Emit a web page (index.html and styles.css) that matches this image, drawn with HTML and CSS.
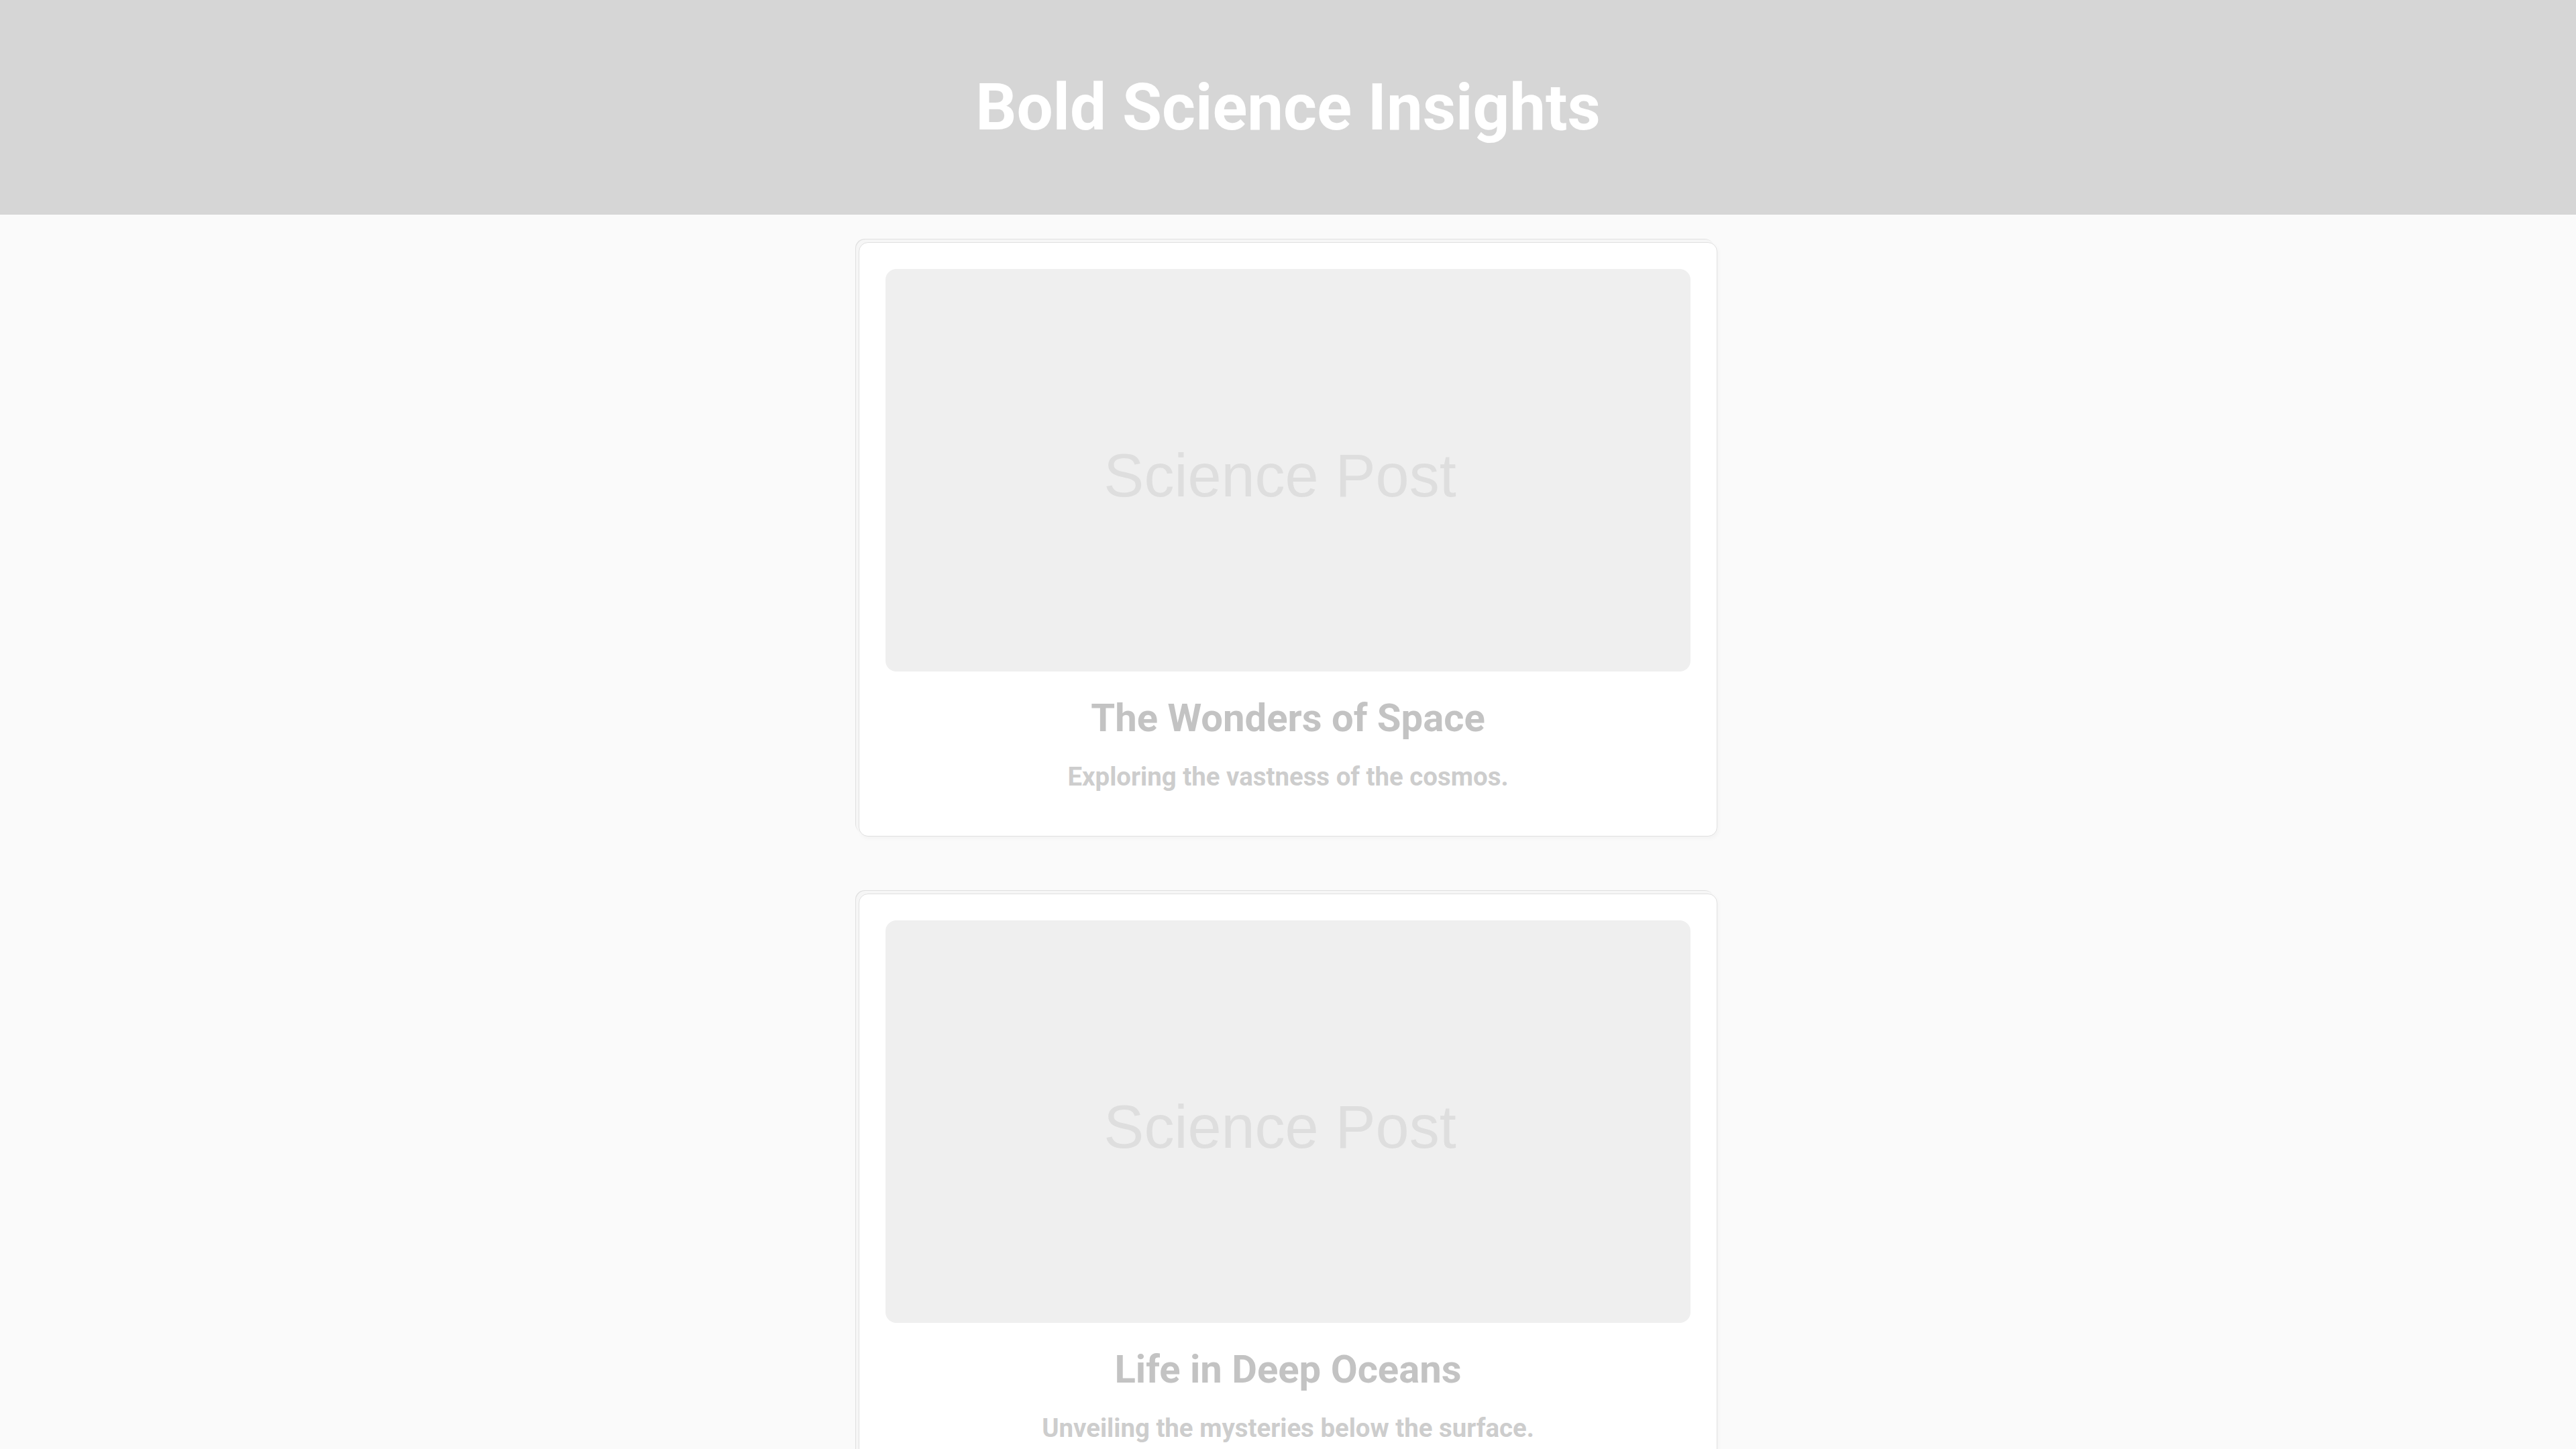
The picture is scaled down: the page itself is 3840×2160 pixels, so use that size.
FILE: index.html
```html
<!DOCTYPE html>
<html lang="en">
<head>
<meta charset="utf-8">
<title>Bold Science Insights</title>
<link rel="stylesheet" href="styles.css">
</head>
<body>
<header class="site-header">
  <h1 class="site-title">Bold Science Insights</h1>
</header>
<main class="posts">
  <article class="card">
    <div class="thumb"><span class="thumb-text">Science Post</span></div>
    <h2 class="card-title">The Wonders of Space</h2>
    <p class="card-text">Exploring the vastness of the cosmos.</p>
  </article>
  <article class="card">
    <div class="thumb"><span class="thumb-text">Science Post</span></div>
    <h2 class="card-title">Life in Deep Oceans</h2>
    <p class="card-text">Unveiling the mysteries below the surface.</p>
  </article>
</main>
</body>
</html>
```

FILE: styles.css
```css
* { box-sizing: border-box; }

html, body {
  margin: 0;
  padding: 0;
}

body {
  background: #fafafa;
  font-family: Roboto, "Liberation Sans", Arial, sans-serif;
}

.site-header {
  height: 320px;
  background: #d6d6d6;
  display: flex;
  align-items: center;
  justify-content: center;
}

.site-title {
  margin: 0;
  color: #ffffff;
  font-family: Roboto, "Liberation Sans", sans-serif;
  font-weight: 700;
  font-size: 96px;
  line-height: 1.172;
}

.posts {
  display: flex;
  flex-direction: column;
  align-items: center;
  gap: 85px;
  padding: 41px 0 80px;
}

.card {
  width: 1280px;
  background: #ffffff;
  border: 1px solid #e0e0e0;
  border-radius: 14px;
  padding: 39px 39px 40px;
  box-shadow: -4px -4px 0 0 #f6f6f6, -5px -5px 0 0 #e0e0e0, 2px 3px 6px rgba(0, 0, 0, 0.03);
  text-align: center;
}

.thumb {
  width: 1200px;
  height: 600px;
  background: #efefef;
  border-radius: 16px;
  display: flex;
  align-items: center;
  justify-content: center;
  padding: 17px 24px 0 0;
}

.thumb-text {
  font-family: "Liberation Sans", Arial, sans-serif;
  font-size: 90px;
  color: #dedede;
  line-height: normal;
}

.card-title {
  margin: 36px 0 0;
  font-size: 58px;
  font-weight: 700;
  line-height: 1.172;
  color: #c3c3c3;
}

.card-text {
  margin: 30px 0 26px;
  font-size: 38.4px;
  font-weight: 700;
  line-height: 1.172;
  color: #cdcdcd;
}
```
